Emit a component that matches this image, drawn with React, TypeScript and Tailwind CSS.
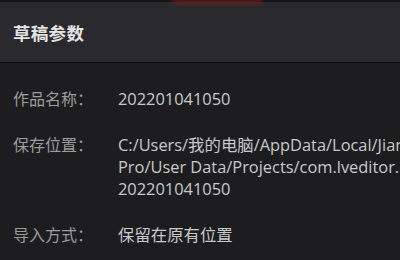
export default function App() {
  const font = { fontFamily: '"Open Sans", "Noto Sans CJK SC", sans-serif' };
  return (
    <div className="w-[400px] h-[260px] overflow-hidden bg-[#1d1d20] flex flex-col" style={font}>
      <div className="h-[2px] bg-[#151517] flex shrink-0">
        <div className="ml-[172px] w-[90px] h-[3px] bg-[#8a1c1f] blur-[2px]" />
      </div>
      <div className="h-[61px] shrink-0 bg-[#2a2a2e] flex items-center px-[13px] pt-[3px] border-b border-[#0e0e10]">
        <h1 className="text-[17.5px] font-bold text-[#e4e4e6] tracking-[0.3px]">草稿参数</h1>
      </div>
      <div className="flex flex-col gap-[24px] pt-[25px] px-[13px] text-[16px] leading-[22px] whitespace-nowrap">
        <div className="flex">
          <span className="w-[105px] shrink-0 text-[#9c9c9e]">作品名称：</span>
          <span className="text-[#c9c9cb] text-[16.4px]">202201041050</span>
        </div>
        <div className="flex">
          <span className="w-[105px] shrink-0 text-[#9c9c9e]">保存位置：</span>
          <span className="text-[#c9c9cb] text-[16.4px] flex flex-col">
            <span>C:/Users/我的电脑/AppData/Local/Jianying</span>
            <span>Pro/User Data/Projects/com.lveditor.draft/</span>
            <span>202201041050</span>
          </span>
        </div>
        <div className="flex">
          <span className="w-[105px] shrink-0 text-[#9c9c9e]">导入方式：</span>
          <span className="text-[#c9c9cb] text-[16.4px]">保留在原有位置</span>
        </div>
      </div>
    </div>
  );
}
